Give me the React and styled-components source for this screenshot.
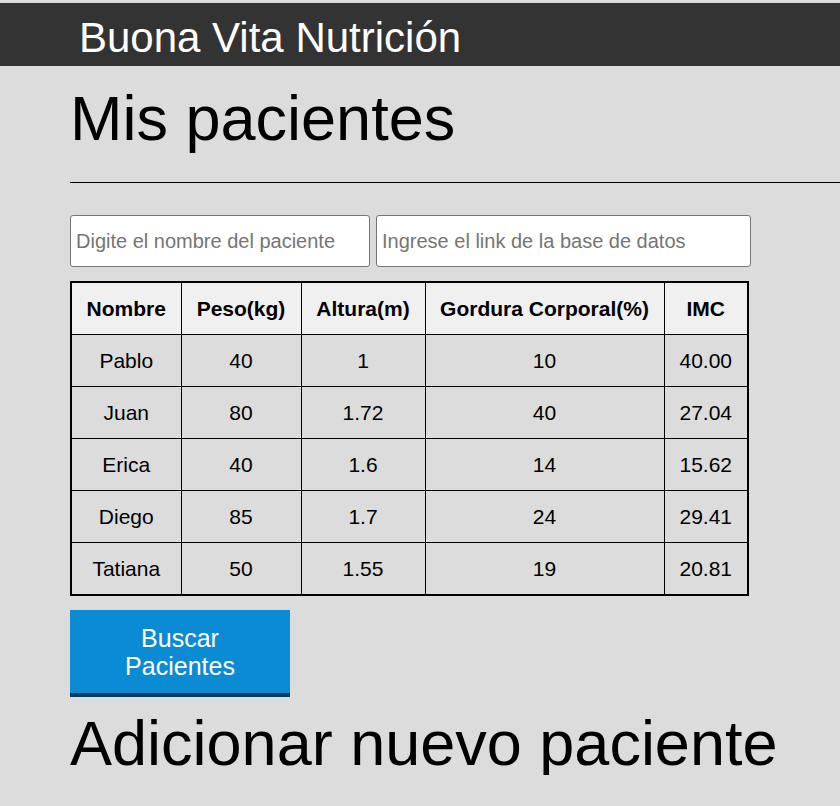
import React from 'react';
import styled, { createGlobalStyle } from 'styled-components';

const GlobalStyle = createGlobalStyle`
  html, body {
    margin: 0;
    padding: 0;
    background: #dcdcdc;
    font-family: "Liberation Sans", Arial, sans-serif;
  }
`

const pacientes = [
  { nombre: 'Pablo', peso: 40, altura: 1, gordura: 10, imc: '40.00' },
  { nombre: 'Juan', peso: 80, altura: 1.72, gordura: 40, imc: '27.04' },
  { nombre: 'Erica', peso: 40, altura: 1.6, gordura: 14, imc: '15.62' },
  { nombre: 'Diego', peso: 85, altura: 1.7, gordura: 24, imc: '29.41' },
  { nombre: 'Tatiana', peso: 50, altura: 1.55, gordura: 19, imc: '20.81' },
]

const columns = [
  { label: 'Nombre', width: 110 },
  { label: 'Peso(kg)', width: 120 },
  { label: 'Altura(m)', width: 124 },
  { label: 'Gordura Corporal(%)', width: 239 },
  { label: 'IMC', width: 84 },
]

export default function App() {
  return (
    <>
      <GlobalStyle />
      <HeaderStyled>
        <h1>Buona Vita Nutrición</h1>
      </HeaderStyled>
      <MainStyled>
        <TitleStyled>Mis pacientes</TitleStyled>
        <RuleStyled />
        <FormRowStyled>
          <InputStyled w={300} placeholder='Digite el nombre del paciente' />
          <InputStyled w={375} placeholder='Ingrese el link de la base de datos' />
        </FormRowStyled>
        <TableStyled>
          <colgroup>
            {columns.map(c => <col key={c.label} style={{ width: c.width }} />)}
          </colgroup>
          <thead>
            <tr>
              {columns.map(c => <th key={c.label}>{c.label}</th>)}
            </tr>
          </thead>
          <tbody>
            {pacientes.map(p => (
              <tr key={p.nombre}>
                <td>{p.nombre}</td>
                <td>{p.peso}</td>
                <td>{p.altura}</td>
                <td>{p.gordura}</td>
                <td>{p.imc}</td>
              </tr>
            ))}
          </tbody>
        </TableStyled>
        <ButtonStyled>Buscar<br />Pacientes</ButtonStyled>
        <TitleStyled $second>Adicionar nuevo paciente</TitleStyled>
      </MainStyled>
    </>
  )
}

const HeaderStyled = styled.header`
  background-color: #333333;
  margin-top: 3px;
  height: 63px;
  box-sizing: border-box;
  padding: 14px 0 0 79px;

  h1 {
    margin: 0;
    color: #ffffff;
    font-weight: normal;
    font-size: 42px;
    line-height: 42px;
  }
`

const MainStyled = styled.main`
  padding-left: 70px;
`

const TitleStyled = styled.h2`
  margin: ${props => props.$second ? '14px 0 0' : '20px 0 0'};
  font-size: 63px;
  line-height: 64px;
  font-weight: normal;
  color: #000;
`

const RuleStyled = styled.hr`
  margin: 32px 0 32px;
  border: none;
  border-top: 1px solid #000;
`

const FormRowStyled = styled.div`
  display: flex;
  gap: 6px;
  margin-bottom: 14px;
`

const InputStyled = styled.input`
  width: ${props => props.w}px;
  height: 52px;
  box-sizing: border-box;
  border: 1px solid #767676;
  border-radius: 3px;
  background: #fff;
  padding: 0 5px;
  font-family: "Liberation Sans", Arial, sans-serif;
  font-size: 20px;

  &::placeholder {
    color: #757575;
  }
`

const TableStyled = styled.table`
  border-collapse: collapse;
  table-layout: fixed;
  width: 677px;
  border: 2px solid #000;
  font-size: 21px;
  color: #000;

  th, td {
    border: 1px solid #000;
    height: 51px;
    padding: 0;
    text-align: center;
  }

  th {
    background-color: #f0f0f0;
    font-weight: bold;
  }
`

const ButtonStyled = styled.button`
  display: block;
  margin-top: 14px;
  width: 220px;
  height: 87px;
  background-color: #0b8bd4;
  border: none;
  border-bottom: 4px solid #023b5c;
  color: #fff;
  font-family: "Liberation Sans", Arial, sans-serif;
  font-size: 25px;
  line-height: 28px;
  padding: 0;
`
